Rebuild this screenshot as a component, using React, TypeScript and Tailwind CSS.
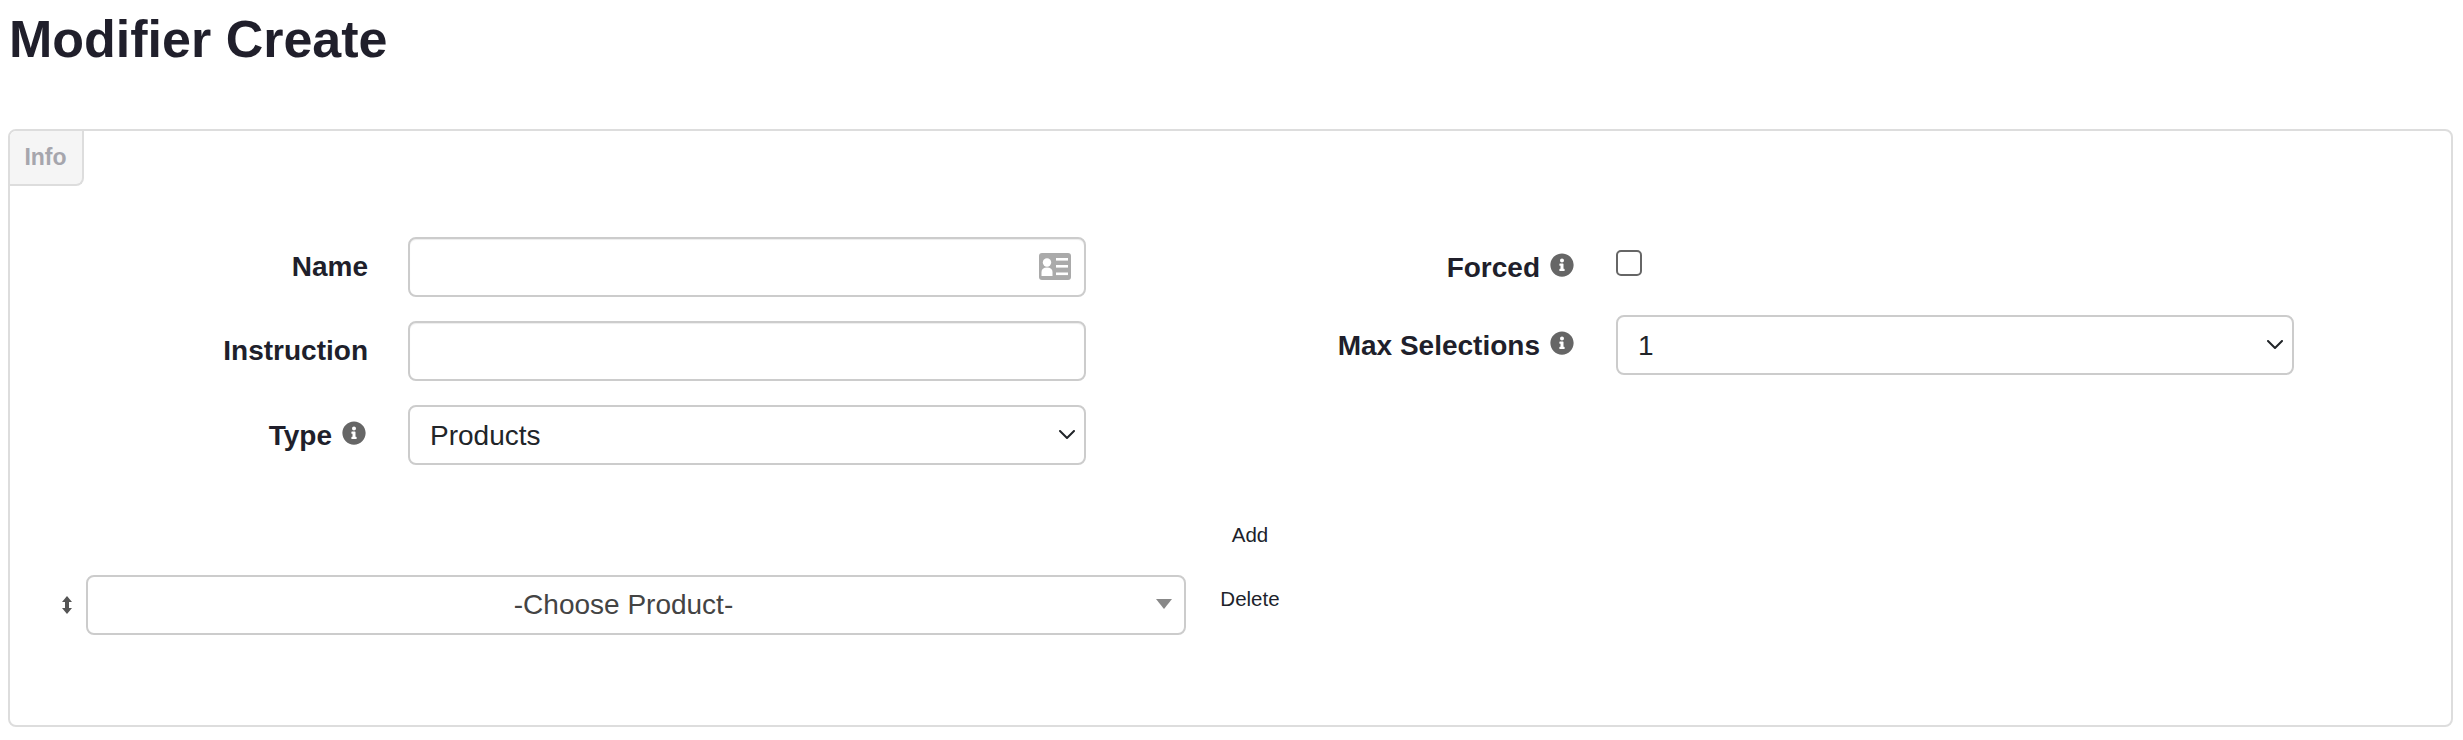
import { FaInfoCircle } from "react-icons/fa";

function Info() {
  return <FaInfoCircle className="w-[24px] h-[24px] text-[#666] -mt-[7px] shrink-0" />;
}

function Chevron() {
  return (
    <svg
      viewBox="0 0 16 10"
      className="absolute right-[11px] top-[25px] w-[16px] h-[10px] pointer-events-none"
      fill="none"
      stroke="#212529"
      strokeWidth="2"
      strokeLinecap="round"
      strokeLinejoin="round"
    >
      <polyline points="1,1 8,8 15,1" />
    </svg>
  );
}

function Select({ value }: { value: string }) {
  return (
    <div className="relative h-[60px] w-[678px]">
      <select
        defaultValue={value}
        className="appearance-none w-full h-full bg-white border-2 border-[#ccc] rounded-lg pl-[20px] pt-[1px] text-[28px] text-[#212529] outline-none"
      >
        <option>{value}</option>
      </select>
      <Chevron />
    </div>
  );
}

export default function App() {
  return (
    <div className="bg-white h-[740px] text-[#201f2b] font-['Liberation_Sans',Arial,sans-serif]">
      <h1 className="h-[129px] pl-[9px] pt-[9px] text-[52px] leading-[60px] font-bold">Modifier Create</h1>

      <div className="ml-[8px] mr-[10px] h-[598px] border-2 border-[#ddd] rounded-lg overflow-hidden">
        {/* Tab */}
        <div className="w-[74px] h-[55px] flex items-center justify-center pr-[1px] bg-[#f5f5f5] border-r-2 border-b-2 border-[#ddd] rounded-br-lg text-[23px] font-bold text-[#a6a6ad]">
          Info
        </div>

        <div className="flex mt-[51px]">
          {/* Left column */}
          <div className="flex flex-col gap-[24px] w-[1076px] shrink-0">
            <div className="flex items-center">
              <label className="w-[358px] text-right text-[28px] font-bold">Name</label>
              <div className="relative ml-[40px] w-[678px] h-[60px]">
                <input className="w-full h-full border-2 border-[#ccc] rounded-lg shadow-[inset_0_1px_1px_rgba(0,0,0,0.075)] outline-none" />
                <svg viewBox="0 0 32 27" className="absolute right-[15px] top-[16px] w-[32px] h-[27px]">
                  <rect width="32" height="27" rx="3" fill="#aaa" />
                  <circle cx="8" cy="9.5" r="4.2" fill="#fff" />
                  <path d="M2.5 23v-4c0-3 2-4.5 5.5-4.5s5.500 1.500 5.500 4.500v4z" fill="#fff" />
                  <rect x="17" y="5" width="12" height="2.600" fill="#fff" />
                  <rect x="17" y="12" width="12" height="2.600" fill="#fff" />
                  <rect x="17" y="19.500" width="12" height="2.600" fill="#fff" />
                </svg>
              </div>
            </div>
            <div className="flex items-center">
              <label className="w-[358px] text-right text-[28px] font-bold">Instruction</label>
              <input className="ml-[40px] w-[678px] h-[60px] border-2 border-[#ccc] rounded-lg shadow-[inset_0_1px_1px_rgba(0,0,0,0.075)] outline-none" />
            </div>
            <div className="flex items-center">
              <label className="w-[358px] flex items-center justify-end gap-[10px] pr-[2px] pt-[2px] text-[28px] font-bold">
                Type <Info />
              </label>
              <div className="ml-[40px]">
                <Select value="Products" />
              </div>
            </div>
          </div>

          {/* Right column */}
          <div className="flex flex-col gap-[24px]">
            <div className="flex items-start h-[54px]">
              <label className="w-[488px] h-[60px] flex items-center justify-end gap-[10px] pt-[2px] text-[28px] font-bold">
                Forced <Info />
              </label>
              <input
                type="checkbox"
                className="appearance-none ml-[42px] mt-[13px] w-[26px] h-[26px] bg-white border-2 border-[#666] rounded-[5px]"
              />
            </div>
            <div className="flex items-center">
              <label className="w-[488px] flex items-center justify-end gap-[10px] pt-[2px] text-[28px] font-bold">
                Max Selections <Info />
              </label>
              <div className="ml-[42px]">
                <Select value="1" />
              </div>
            </div>
          </div>
        </div>

        {/* Product row */}
        <div className="flex items-start mt-[56px] pl-[51px]">
          <div className="flex items-center gap-[13px] mt-[54px]">
            <svg viewBox="0 0 12 18" className="w-[12px] h-[18px]">
              <polygon points="6,0 11,6 8,6 8,12 11,12 6,18 1,12 4,12 4,6 1,6" fill="#555" />
            </svg>
            <div className="relative w-[1100px] h-[60px]">
              <select
                defaultValue="-Choose Product-"
                className="appearance-none w-full h-full bg-white border-2 border-[#ccc] rounded-lg pr-[25px] text-[28px] text-[#444] text-center [text-align-last:center] outline-none"
              >
                <option>-Choose Product-</option>
              </select>
              <svg viewBox="0 0 16 10" className="absolute right-[14px] top-[24px] w-[16px] h-[10px] pointer-events-none">
                <polygon points="0,0 16,0 8,10" fill="#888" />
              </svg>
            </div>
          </div>
          <div className="flex flex-col items-center w-[128px] pt-[2px] text-[20.5px] leading-[24px] gap-[40px]">
            <button>Add</button>
            <button>Delete</button>
          </div>
        </div>
      </div>
    </div>
  );
}
